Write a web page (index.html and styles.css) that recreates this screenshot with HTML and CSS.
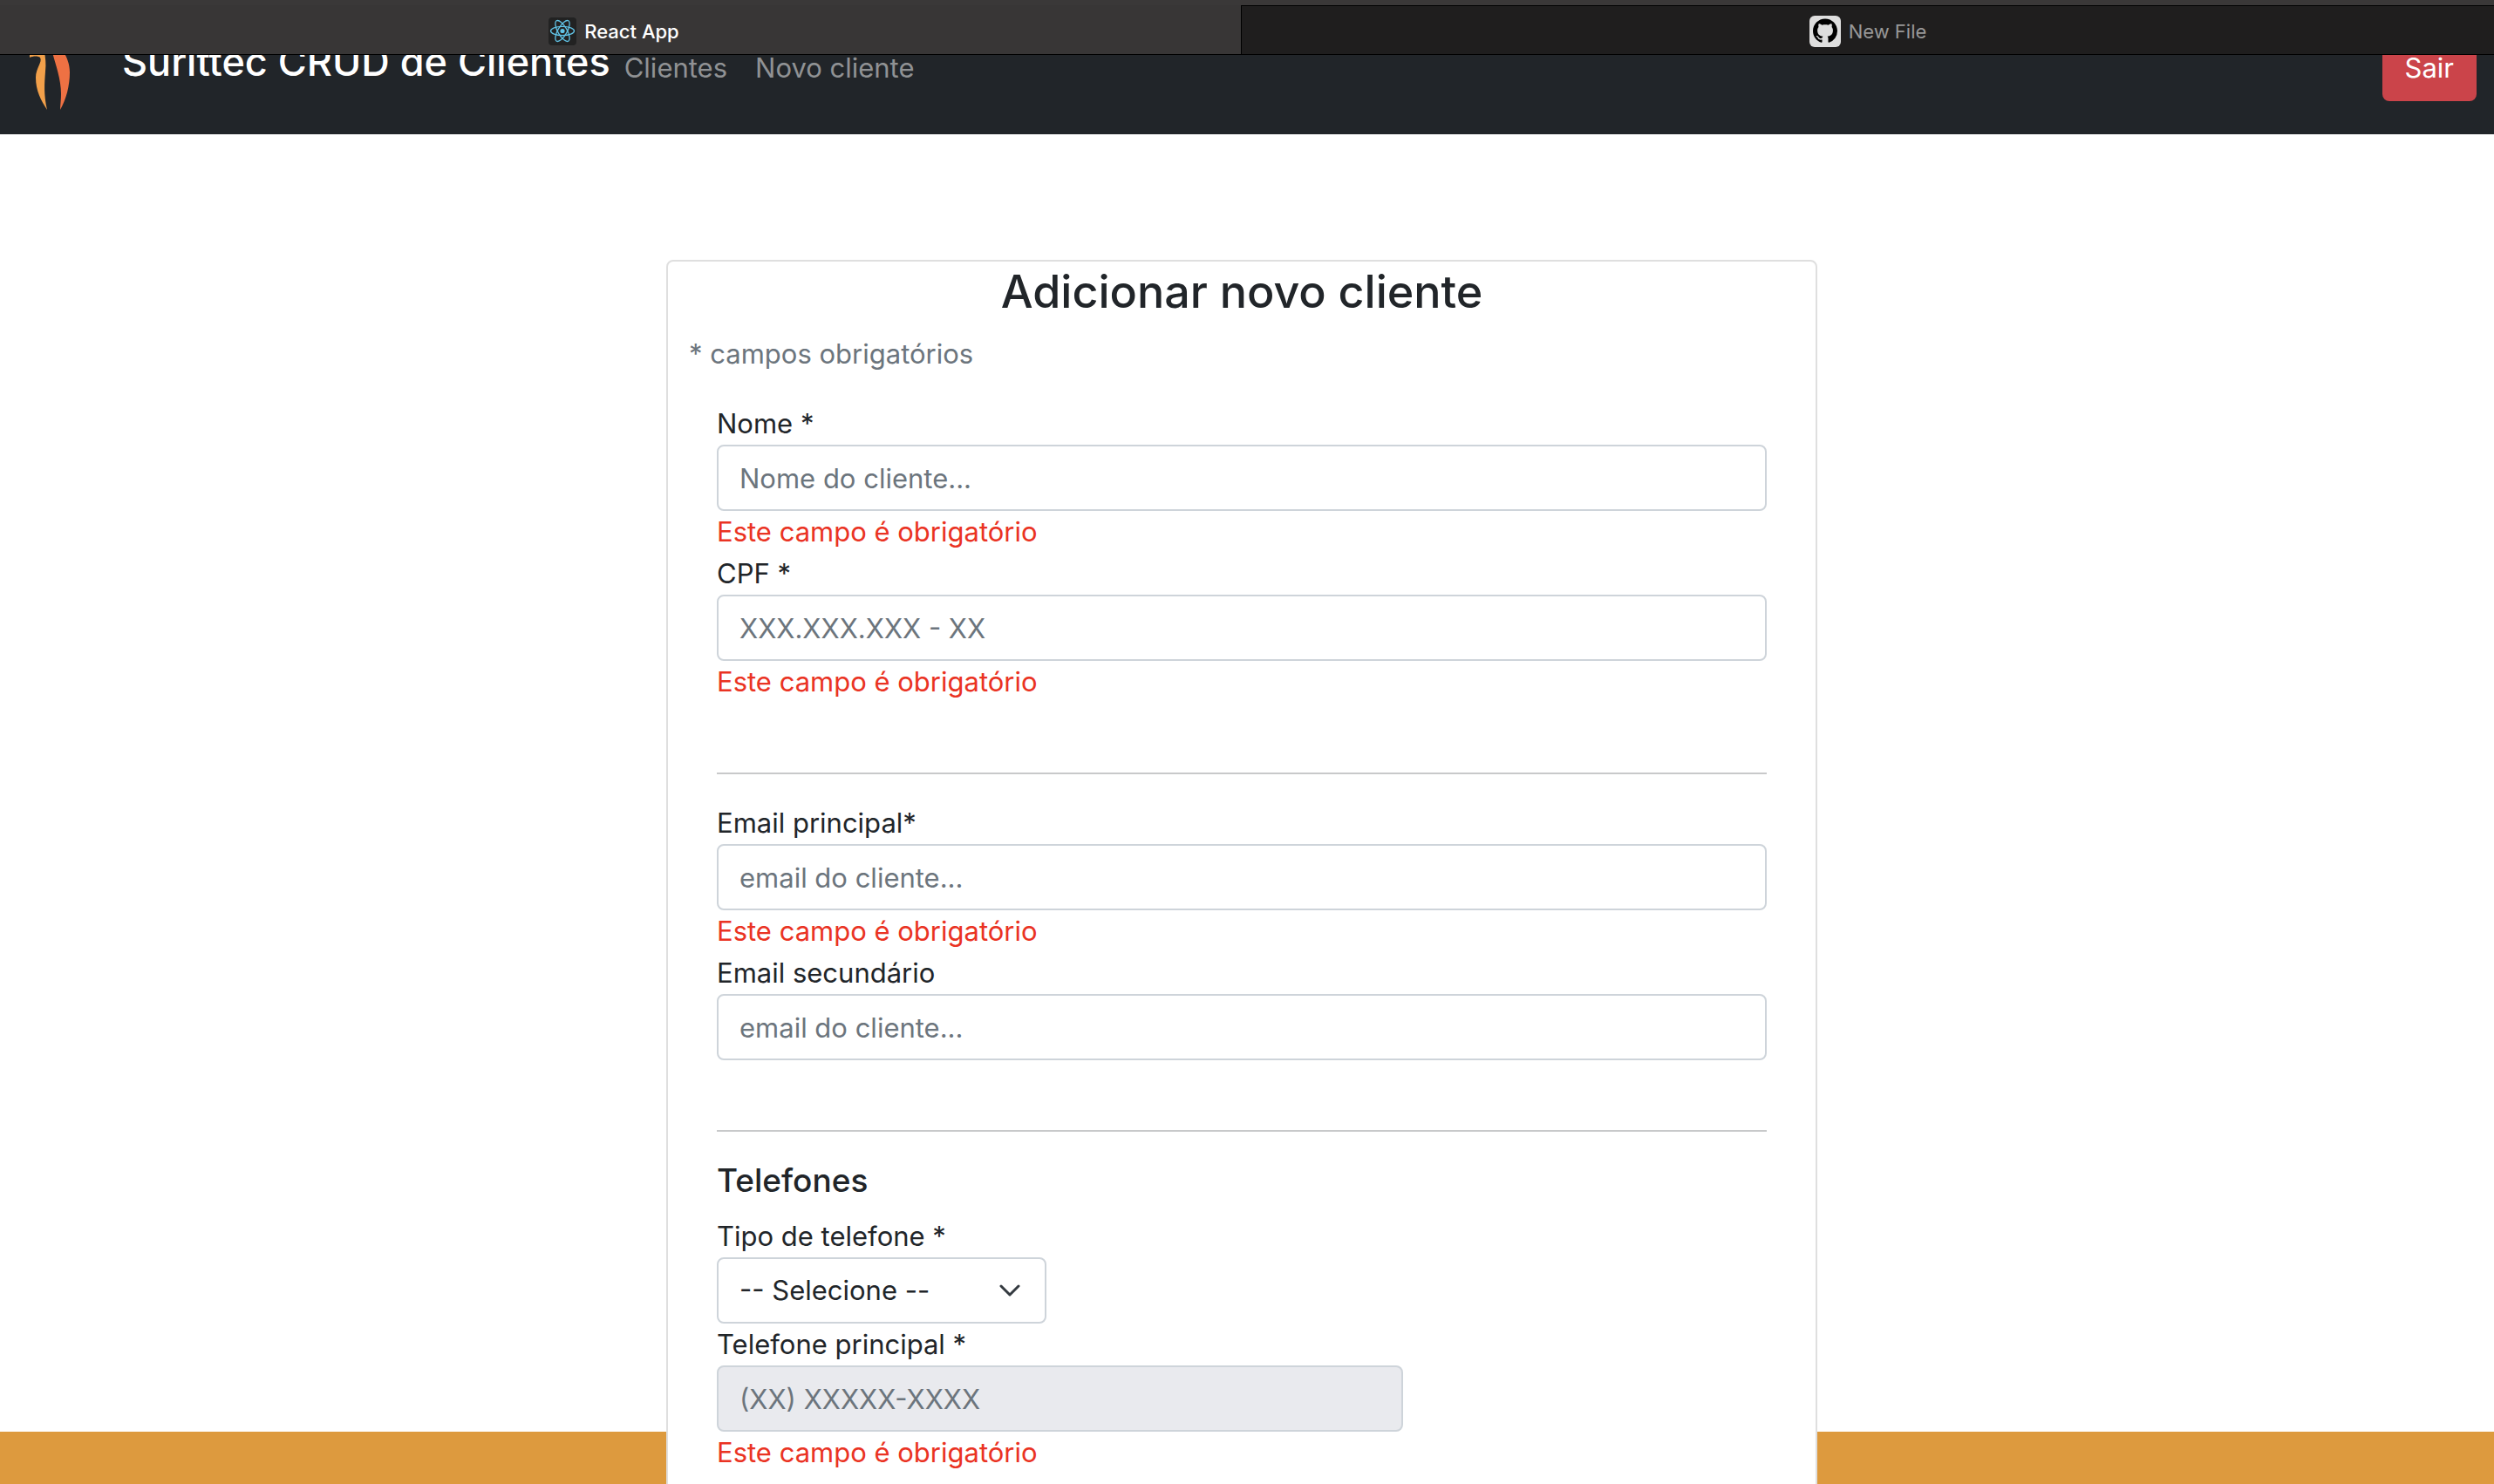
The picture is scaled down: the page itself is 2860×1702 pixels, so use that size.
FILE: index.html
```html
<!DOCTYPE html>
<html lang="pt-BR">
<head>
<meta charset="utf-8">
<title>React App</title>
<link rel="stylesheet" href="styles.css">
</head>
<body>
<div class="tabs" role="tablist">
  <button class="tab tab-active" type="button" role="tab" aria-selected="true">
    <svg class="tab-icon" viewBox="0 0 32 32" width="32" height="32" aria-hidden="true">
      <rect width="32" height="32" rx="4" fill="#222222"/>
      <g fill="none" stroke="#61c3e6" stroke-width="1.3">
        <ellipse cx="16" cy="15.500" rx="13.500" ry="5.200"/>
        <ellipse cx="16" cy="15.500" rx="13.500" ry="5.200" transform="rotate(60 16 15.500)"/>
        <ellipse cx="16" cy="15.500" rx="13.500" ry="5.200" transform="rotate(120 16 15.500)"/>
      </g>
      <circle cx="16" cy="15.500" r="2.600" fill="#61c3e6"/>
    </svg>
    <span>React App</span>
  </button>
  <button class="tab" type="button" role="tab" aria-selected="false">
    <svg class="tab-icon" viewBox="0 0 36 36" width="36" height="36" aria-hidden="true">
      <rect width="36" height="36" rx="6" fill="#dedede"/>
      <g transform="translate(4 3.500) scale(1.75)">
        <path fill="#000000" d="M8 0C3.580 0 0 3.580 0 8c0 3.540 2.290 6.530 5.470 7.590.4.070.55-.17.55-.38 0-.19-.01-.82-.01-1.490-2.010.37-2.530-.49-2.690-.94-.09-.23-.48-.94-.82-1.130-.28-.15-.68-.52-.01-.53.63-.01 1.080.58 1.230.82.72 1.210 1.870.87 2.330.66.07-.52.28-.87.51-1.070-1.780-.2-3.640-.89-3.640-3.950 0-.87.31-1.590.82-2.150-.08-.2-.36-1.020.08-2.120 0 0 .67-.21 2.200.82.64-.18 1.320-.27 2-.27s1.360.09 2 .27c1.530-1.040 2.200-.82 2.200-.82.44 1.100.16 1.920.08 2.120.51.56.82 1.270.82 2.150 0 3.070-1.870 3.750-3.650 3.950.29.25.54.73.54 1.480 0 1.070-.01 1.930-.01 2.200 0 .21.15.46.55.38A8.010 8.010 0 0 0 16 8c0-4.420-3.580-8-8-8z"/>
      </g>
    </svg>
    <span>New File</span>
  </button>
</div>

<nav class="navbar">
  <svg class="logo" viewBox="20 30 80 96" width="80" height="96" aria-hidden="true">
    <path fill="#f2a04a" d="M34 60 L34 66 C38 64 44 64 46 66 C49 71 41 78 41 89 C41 104 47 115 54 126 C50 108 51 96 52 82 C53 73 52 66 51 60 Z"/>
    <path fill="#ee7143" d="M60 60 C64 75 70 91 70 108 C70 115 69 121 69 126 C76 114 80 98 80 83 C80 74 77 66 73 60 Z"/>
  </svg>
  <h4 class="brand">Surittec CRUD de Clientes</h4>
  <a class="nav-link" href="#clientes">Clientes</a>
  <a class="nav-link" href="#novo">Novo cliente</a>
  <button class="logout" type="button">Sair</button>
</nav>

<main class="page">
  <section class="card">
    <h3 class="card-title">Adicionar novo cliente</h3>
    <p class="hint">* campos obrigatórios</p>
    <form class="form">
      <label class="label" for="nome">Nome *</label>
      <input class="input" id="nome" type="text" placeholder="Nome do cliente...">
      <p class="error">Este campo é obrigatório</p>
      <label class="label" for="cpf">CPF *</label>
      <input class="input" id="cpf" type="text" placeholder="XXX.XXX.XXX - XX">
      <p class="error">Este campo é obrigatório</p>
      <hr class="rule">
      <label class="label" for="email1">Email principal*</label>
      <input class="input" id="email1" type="email" placeholder="email do cliente...">
      <p class="error">Este campo é obrigatório</p>
      <label class="label" for="email2">Email secundário</label>
      <input class="input" id="email2" type="email" placeholder="email do cliente...">
      <hr class="rule">
      <h5 class="section-title">Telefones</h5>
      <label class="label" for="tipo">Tipo de telefone *</label>
      <div class="select-wrap">
        <select class="input select" id="tipo"><option>-- Selecione --</option></select>
        <svg class="chevron" viewBox="0 0 24 24" width="24" height="24" aria-hidden="true"><path d="M2 7l10 10 10-10" fill="none" stroke="#343a40" stroke-width="3" stroke-linecap="round" stroke-linejoin="round"/></svg>
      </div>
      <label class="label" for="fone">Telefone principal *</label>
      <input class="input input-phone" id="fone" type="tel" placeholder="(XX) XXXXX-XXXX" disabled>
      <p class="error">Este campo é obrigatório</p>
    </form>
  </section>
</main>
<footer class="footer"></footer>
</body>
</html>
```
FILE: styles.css
```css
* {
  box-sizing: border-box;
}

body {
  margin: 0;
  height: 100vh;
  overflow: hidden;
  background: #ffffff;
  color: #212529;
  font-family: Inter, "Liberation Sans", sans-serif;
  font-size: 31px;
  line-height: 48px;
}

h3, h4, h5, p {
  margin: 0;
  font-weight: 500;
}

button, input, select {
  font: inherit;
}

/* Browser tab strip, pinned over the scrolled page */
.tabs {
  position: fixed;
  top: 0;
  left: 0;
  right: 0;
  z-index: 3;
  display: flex;
  height: 63px;
  padding-top: 6px;
  background: #3a3838;
  border-bottom: 1px solid #000000;
}

.tab {
  flex: 1 1 50%;
  display: flex;
  align-items: center;
  justify-content: center;
  gap: 9px;
  padding: 2px 0 0;
  border: 0;
  border-top: 1px solid #000000;
  border-left: 1px solid #000000;
  background: #1f1e1e;
  color: #989898;
  font-size: 22px;
  line-height: 32px;
}

.tab-active {
  flex: 0 0 calc(50% - 7px);
  padding-right: 16px;
  border-color: #383636;
  background: #383636;
  color: #ffffff;
  font-weight: 500;
}

.navbar {
  display: flex;
  align-items: center;
  padding: 30px 20px 28px;
  background: #212529;
}

.logo {
  margin-right: 40px;
}

.brand {
  margin-bottom: 14px;
  color: #ffffff;
  font-size: 45px;
  line-height: 58px;
}

.nav-link {
  padding: 0 16px;
  color: #909294;
  text-decoration: none;
}

.logout {
  margin-left: auto;
  padding: 12px 24px;
  border: 2px solid #cb444a;
  border-radius: 8px;
  background: #cb444a;
  color: #ffffff;
}

.page {
  padding: 144px 12px 0 0;
}

.card {
  position: relative;
  z-index: 2;
  max-width: 1320px;
  margin: 0 auto;
  padding: 0 24px 24px;
  border: 2px solid #dfdfdf;
  border-radius: 8px;
  background: #ffffff;
}

.card-title {
  margin-bottom: 12px;
  font-size: 52px;
  line-height: 70px;
  text-align: center;
}

.hint {
  margin-bottom: 32px;
  color: #6c757d;
  font-weight: 400;
}

.form {
  display: flex;
  flex-direction: column;
  align-items: stretch;
  padding: 0 32px;
}

.input {
  width: 100%;
  height: 76px;
  padding: 12px 24px;
  border: 2px solid #ced4da;
  border-radius: 8px;
  background: #ffffff;
  color: #212529;
}

.input::placeholder {
  color: #6c757d;
  opacity: 1;
}

.input-phone {
  max-width: 787px;
}

.input:disabled {
  background: #e9eaee;
}

.error {
  color: #ea3323;
  font-weight: 400;
}

.rule {
  width: 100%;
  height: 2px;
  margin: 80px 0 32px;
  border: 0;
  background: #c8c9ca;
}

.error + .rule {
  margin-top: 80px;
}

.section-title {
  margin-bottom: 16px;
  font-size: 37px;
}

.select-wrap {
  display: flex;
  position: relative;
  max-width: 378px;
}

.select {
  appearance: none;
}

.chevron {
  position: absolute;
  top: 26px;
  right: 30px;
  pointer-events: none;
}

.footer {
  position: fixed;
  right: 0;
  bottom: 0;
  left: 0;
  z-index: 1;
  height: 60px;
  background: #dd9a3e;
}
```
